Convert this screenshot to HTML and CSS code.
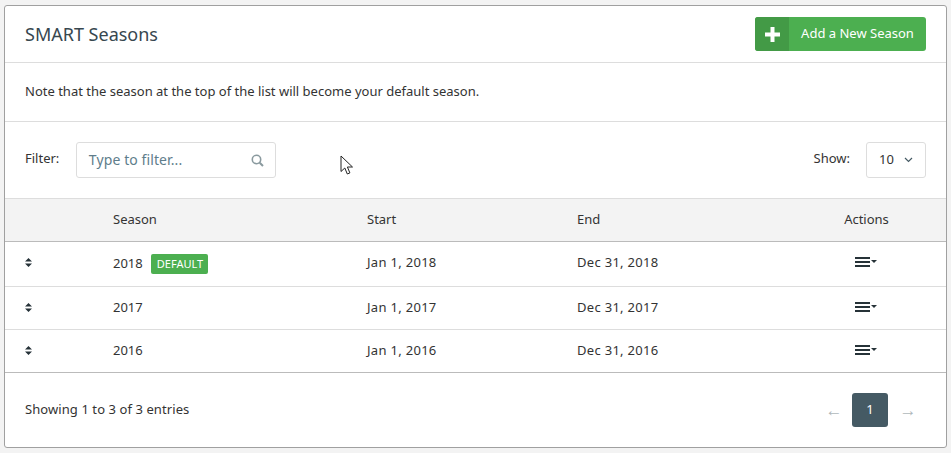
FILE: index.html
```html
<!DOCTYPE html>
<html lang="en">
<head>
    <meta charset="UTF-8">
    <meta name="viewport" content="width=device-width, initial-scale=1.0">
    <title>SMART Seasons</title>
    <link rel="stylesheet" href="styles.css">
</head>
<body>
    <div class="panel">
        <div class="panel-heading">
            <h5 class="panel-title">SMART Seasons</h5>
            <button class="btn-add">
                <span class="btn-add-icon">
                    <svg width="15" height="15" viewBox="0 0 15 15"><path d="M5.500 0h4v5.500H15v4H9.500V15h-4V9.500H0v-4h5.500z" fill="#fff"/></svg>
                </span>
                <span class="btn-add-text">Add a New Season</span>
            </button>
        </div>
        <div class="panel-note">Note that the season at the top of the list will become your default season.</div>
        <div class="filter-bar">
            <div class="filter-left">
                <span class="filter-label">Filter:</span>
                <div class="filter-input">
                    <span class="placeholder">Type to filter...</span>
                    <svg width="13" height="13" viewBox="0 0 13 13" fill="none" stroke="#8a9a9f"><circle cx="5.500" cy="5.500" r="4.200" stroke-width="1.600"/><path d="M8.700 8.700l3.300 3.300" stroke-width="2"/></svg>
                </div>
            </div>
            <div class="filter-right">
                <span class="filter-label">Show:</span>
                <div class="show-select">
                    <span class="show-value">10</span>
                    <svg width="9" height="6" viewBox="0 0 9 6" fill="none" stroke="#455a64" stroke-width="1.200"><path d="M1 1l3.500 3.500L8 1"/></svg>
                </div>
            </div>
        </div>
        <table class="seasons">
            <thead>
                <tr>
                    <th class="col-sort"></th>
                    <th class="col-season">Season</th>
                    <th class="col-start">Start</th>
                    <th class="col-end">End</th>
                    <th class="col-actions">Actions</th>
                </tr>
            </thead>
            <tbody>
                <tr class="row-first">
                    <td><svg class="sort" width="7" height="9" viewBox="0 0 7 9"><path d="M3.500 0L7 3.600H0zM3.500 9L0 5.400h7z" fill="#263238"/></svg></td>
                    <td class="year">2018<span class="badge">DEFAULT</span></td>
                    <td class="date">Jan 1, 2018</td>
                    <td class="date">Dec 31, 2018</td>
                    <td class="col-actions"><svg class="menu-icon" width="22" height="10" viewBox="0 0 22 10"><path d="M0 0h15v2H0zM0 4h15v2H0zM0 8h15v2H0z" fill="#263238"/><path d="M16 3h6l-3 3z" fill="#263238"/></svg></td>
                </tr>
                <tr>
                    <td><svg class="sort" width="7" height="9" viewBox="0 0 7 9"><path d="M3.500 0L7 3.600H0zM3.500 9L0 5.400h7z" fill="#263238"/></svg></td>
                    <td class="year">2017</td>
                    <td class="date">Jan 1, 2017</td>
                    <td class="date">Dec 31, 2017</td>
                    <td class="col-actions"><svg class="menu-icon" width="22" height="10" viewBox="0 0 22 10"><path d="M0 0h15v2H0zM0 4h15v2H0zM0 8h15v2H0z" fill="#263238"/><path d="M16 3h6l-3 3z" fill="#263238"/></svg></td>
                </tr>
                <tr>
                    <td><svg class="sort" width="7" height="9" viewBox="0 0 7 9"><path d="M3.500 0L7 3.600H0zM3.500 9L0 5.400h7z" fill="#263238"/></svg></td>
                    <td class="year">2016</td>
                    <td class="date">Jan 1, 2016</td>
                    <td class="date">Dec 31, 2016</td>
                    <td class="col-actions"><svg class="menu-icon" width="22" height="10" viewBox="0 0 22 10"><path d="M0 0h15v2H0zM0 4h15v2H0zM0 8h15v2H0z" fill="#263238"/><path d="M16 3h6l-3 3z" fill="#263238"/></svg></td>
                </tr>
            </tbody>
        </table>
        <div class="panel-footer">
            <span class="entries">Showing 1 to 3 of 3 entries</span>
            <div class="pager">
                <span class="pager-arrow">&larr;</span>
                <span class="pager-current">1</span>
                <span class="pager-arrow">&rarr;</span>
            </div>
        </div>
    </div>
    <svg class="mouse-cursor" width="14" height="21" viewBox="0 0 14 21"><path d="M1 1v15.500l3.800-3.500 2.500 6 2.600-1.100-2.500-5.900h5.100z" fill="#fff" stroke="#222" stroke-width="1"/></svg>
</body>
</html>
```

FILE: styles.css
```css
body {
    margin: 0;
    padding: 5px 4px 5px 4px;
    background: #f3f3f3;
    color: #333;
    font-family: "Noto Sans", sans-serif;
    font-size: 13px;
    line-height: 18px;
}
.panel {
    width: 943px;
    height: 443px;
    box-sizing: border-box;
    background: #fff;
    border: 1px solid #a0a0a0;
    border-radius: 3px;
    display: flex;
    flex-direction: column;
}
.panel-heading {
    height: 56px;
    display: flex;
    justify-content: space-between;
    align-items: center;
    padding: 0 20px;
    border-bottom: 1px solid #ddd;
}
.panel-title {
    margin: 0;
    font-size: 18px;
    font-weight: 400;
    color: #37474f;
}
.btn-add {
    display: flex;
    width: 171px;
    height: 34px;
    padding: 0;
    border: 0;
    border-radius: 3px;
    overflow: hidden;
    background: #4caf50;
    color: #fff;
    font: inherit;
}
.btn-add-icon {
    width: 34px;
    height: 34px;
    display: flex;
    justify-content: center;
    align-items: center;
    background: #439a46;
}
.btn-add-text {
    flex: 1;
    line-height: 32px;
    text-align: center;
}
.panel-note {
    height: 58px;
    line-height: 56px;
    padding: 0 20px;
    border-bottom: 1px solid #ddd;
}
.filter-bar {
    height: 76px;
    display: flex;
    justify-content: space-between;
    align-items: center;
    padding: 0 20px;
}
.filter-left, .filter-right {
    display: flex;
    align-items: center;
    gap: 16px;
}
.filter-label {
    padding-bottom: 4px;
}
.filter-input {
    width: 200px;
    height: 36px;
    margin-left: 0.500px;
    box-sizing: border-box;
    display: flex;
    justify-content: space-between;
    align-items: center;
    padding: 0 11px 0 12px;
    border: 1px solid #ddd;
    border-radius: 3px;
}
.placeholder { color: #607d8b; font-size: 14px; letter-spacing: 0.100px; }
.show-select {
    width: 60px;
    height: 36px;
    box-sizing: border-box;
    display: flex;
    align-items: center;
    gap: 10px;
    padding-left: 12px;
    border: 1px solid #ddd;
    border-radius: 3px;
}
.show-value { padding-bottom: 3px; }
.seasons {
    width: 100%;
    border-collapse: collapse;
    table-layout: fixed;
}
.seasons th {
    height: 40px;
    padding: 0 0 2px;
    text-align: left;
    font-weight: 400;
    background: #f3f3f3;
    border-top: 1px solid #ddd;
    border-bottom: 1px solid #bbb;
}
.seasons td {
    height: 40px;
    padding: 0 0 2px;
    border-bottom: 1px solid #ddd;
}
.seasons tr:last-child td { border-bottom-color: #bbb; }
.seasons .row-first td { height: 40px; padding-bottom: 4px; }
.seasons .row-first .year { height: 44px; padding-bottom: 0; }
.seasons td:first-child { padding-left: 20px; }
.date { letter-spacing: 0.300px; }
.col-sort { width: 108px; }
.col-season { width: 254px; }
.col-start { width: 210px; }
.col-end { width: 210px; }
.seasons .col-actions { text-align: center; }
.sort { display: block; }
.menu-icon { display: block; margin: 0 auto; position: relative; left: -1px; }
.badge {
    display: inline-block;
    margin-left: 8px;
    padding: 0 5px 0 6px;
    height: 20px;
    line-height: 20px;
    vertical-align: middle;
    background: #4caf50;
    color: #fff;
    font-size: 11px;
    border-radius: 2px;
}
.panel-footer {
    flex: 1;
    display: flex;
    justify-content: space-between;
    align-items: center;
    padding: 0 20px;
}
.entries { padding-bottom: 2px; letter-spacing: 0.080px; }
.pager {
    display: flex;
    align-items: center;
    padding-right: 8px;
}
.pager-arrow {
    width: 20px;
    text-align: center;
    color: #b0b8bb;
    font-size: 17px;
}
.pager-arrow:first-child { margin-right: 8px; }
.pager-arrow:last-child { margin-left: 10px; }
.pager-current {
    width: 36px;
    height: 34px;
    line-height: 32px;
    text-align: center;
    background: #455a64;
    color: #fff;
    border-radius: 3px;
}
.mouse-cursor {
    position: absolute;
    left: 340px;
    top: 155px;
}
```
